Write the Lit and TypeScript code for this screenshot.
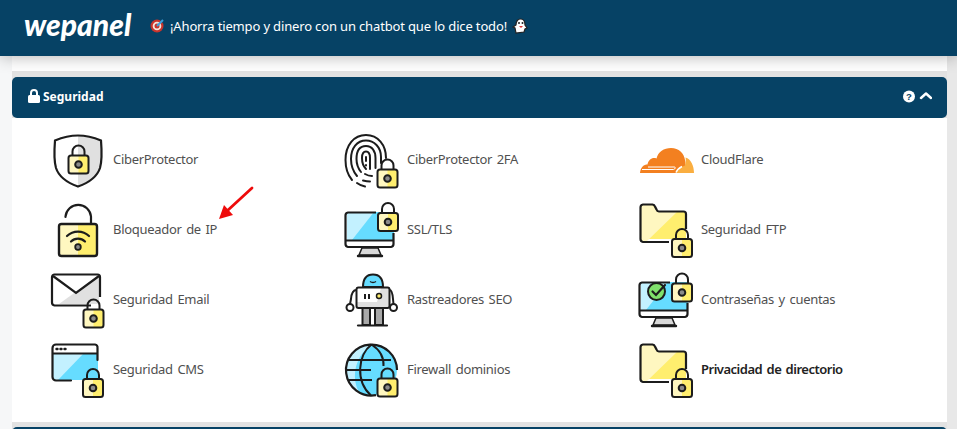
import { LitElement, html, css, svg } from "lit";
import { customElement } from "lit/decorators.js";

const INK = "#1c1c1c";
const lock = (x: number, y: number) => svg`
  <g transform="translate(${x} ${y})">
    <path d="M4.5 1V-3.5A6 6 0 0 1 16.5 -3.5V1" fill="none" stroke="${INK}" stroke-width="2"/>
    <rect x="0.5" y="0.5" width="20" height="18" rx="2.5" fill="#ffee6e"/>
    <path d="M3 0.5H10.5V18.5H3A2.5 2.5 0 0 1 0.5 16V3A2.5 2.5 0 0 1 3 0.5Z" fill="#fff7c0"/>
    <rect x="0.5" y="0.5" width="20" height="18" rx="2.5" fill="none" stroke="${INK}" stroke-width="2"/>
    <circle cx="10.5" cy="9.5" r="3.3" fill="#8a8a8a" stroke="${INK}" stroke-width="2"/>
  </g>`;

const monitor = (extra: unknown) => svg`
  <path d="M3 9H50V37H3Z" fill="#66dcff"/>
  <path d="M3 9H30L8 37H3Z" fill="#c3f1ff"/>
  <path d="M3 37H50V44H3Z" fill="#fff"/>
  <path d="M18 45H34L37 52H15Z" fill="#d9d9d9" stroke="${INK}" stroke-width="1.5"/>
  <path d="M14 53H38" stroke="${INK}" stroke-width="2.4" stroke-linecap="round"/>
  <path d="M32 9.5H4A3 3 0 0 0 1.500 12.500V41A3 3 0 0 0 4 44H47A3 3 0 0 0 49.500 41V30M2 37.500H49.500" fill="none" stroke="${INK}" stroke-width="2.200"/>
  ${extra}`;

const folder = svg`
  <path d="M5 1.500H14A3 3 0 0 1 17 3.500L19 8H46A3 3 0 0 1 48 11V36H5Z" fill="#ffee6e"/>
  <path d="M3 4A2 2 0 0 1 5 1.500H14L19 8H40L8 39H5A2 2 0 0 1 3 37Z" fill="#fff7c0"/>
  <path d="M31 39H5A3 3 0 0 1 2.500 36V4.500A3 3 0 0 1 5 1.500H14.500A3 3 0 0 1 17 3.500L18.500 6.500A3 3 0 0 0 21 8.500H45.500A2.500 2.500 0 0 1 48 11V26" fill="none" stroke="${INK}" stroke-width="2.200"/>
  ${lock(33.500, 35.500)}`;

const ICONS: Record<string, unknown> = {
  shield: svg`
    <path d="M28 2.500C18 2.500 11 5 5 7.500C4 20 4 28 6 35C9 44 18 50 28 53.500C38 50 47 44 50 35C52 28 52 20 51 7.500C45 5 38 2.500 28 2.500Z" fill="#e0e0e0"/>
    <path d="M28 2.500C18 2.500 11 5 5 7.500C4 20 4 28 6 35C9 44 18 50 28 53.500Z" fill="#fff"/>
    <path d="M28 2.500C18 2.500 11 5 5 7.500C4 20 4 28 6 35C9 44 18 50 28 53.500C38 50 47 44 50 35C52 28 52 20 51 7.500C45 5 38 2.500 28 2.500Z" fill="none" stroke="${INK}" stroke-width="2.200"/>
    ${lock(18, 22)}`,
  padlock: svg`
    <path d="M15.500 14V13.500A12.800 12.800 0 0 1 41 13.500V21" fill="none" stroke="${INK}" stroke-width="2.200" stroke-linecap="round"/>
    <rect x="9" y="21" width="38" height="32" rx="2.500" fill="#ffee6e"/>
    <path d="M9 21H28V53H9Z" fill="#fff7c0"/>
    <rect x="9" y="21" width="38" height="32" rx="2.500" fill="none" stroke="${INK}" stroke-width="2.400"/>
    <path d="M17 33A16 16 0 0 1 39 33M21 38.500A10 10 0 0 1 35 38.500" fill="none" stroke="${INK}" stroke-width="2.200" stroke-linecap="round"/>
    <circle cx="28" cy="44" r="2.800" fill="#8a8a8a" stroke="${INK}" stroke-width="1.800"/>`,
  mail: svg`
    <path d="M3 2H49V32H3Z" fill="#fff"/>
    <path d="M49 2V31H9Z" fill="#e0e0e0"/>
    <path d="M41 32.500H4.500A3 3 0 0 1 2 29.500V4A2.500 2.500 0 0 1 4.500 1.500H47.500A2.500 2.500 0 0 1 50 4V24" fill="none" stroke="${INK}" stroke-width="2.200"/>
    <path d="M3 3L26 20L49 3" fill="none" stroke="${INK}" stroke-width="2.200"/>
    ${lock(33, 36)}`,
  cms: svg`
    <path d="M3 10H48V37H3Z" fill="#66dcff"/>
    <path d="M3 10H34L8 37H3Z" fill="#c3f1ff"/>
    <path d="M21 37.500H6A3.500 3.500 0 0 1 2.500 34V5A3.500 3.500 0 0 1 6 1.500H45A3 3 0 0 1 47.500 5V17M2.500 10.500H47.500" fill="none" stroke="${INK}" stroke-width="2.200" stroke-linecap="round"/>
    <path d="M6.500 6H7.500M10.500 6H11.500M14.500 6H15.500" stroke="${INK}" stroke-width="2.400" stroke-linecap="round"/>
    ${lock(32.500, 35.500)}`,
  finger: svg`
    <g fill="none" stroke="${INK}" stroke-width="2" stroke-linecap="round">
      <path d="M8 47C3 41 1.500 35 1.500 27C1.500 12 10 2 22 2C34 2 42 12 42 25"/>
      <path d="M13 50C15 51.500 18 53 21 53.500"/>
      <path d="M13 43C8 37 7 31 7 26C7 15 13 7.500 22 7.500C30 7.500 37 14 37 24V30"/>
      <path d="M19 47.500C21 48 24 48.500 26 48.500"/>
      <path d="M17 39C13 34 12.500 30 12.500 26C12.500 17 16 13 22 13C28 13 31.500 18 31.500 25V35"/>
      <path d="M21 41C23.500 42.500 26 43 28 43"/>
      <path d="M22 36C19 33 18 29 18 25C18 20 19.500 18.500 22 18.500C24.500 18.500 26 20.500 26 25V36"/>
      <path d="M22 24V28M22 32V32.500"/>
    </g>
    ${lock(33, 36)}`,
  ssl: monitor(lock(33.500, 9.500)),
  robot: svg`
    <path d="M19 14C19 5 23 1.500 29 1.500C35 1.500 39 5 39 14Z" fill="#66dcff" stroke="${INK}" stroke-width="2"/>
    <path d="M26 8.500Q29 10.500 32 8.500" fill="none" stroke="${INK}" stroke-width="1.500"/>
    <path d="M12.500 15H45.500V33A2 2 0 0 1 43.500 35H14.500A2 2 0 0 1 12.500 33Z" fill="#fff"/>
    <path d="M37 15H45.500V33A2 2 0 0 1 43.500 35H14.500A2 2 0 0 1 12.500 33V29H33Z" fill="#e0e0e0"/>
    <path d="M14.500 14.500H43.500A2 2 0 0 1 45.500 16.500V33A2 2 0 0 1 43.500 35H14.500A2 2 0 0 1 12.500 33V16.500A2 2 0 0 1 14.500 14.500Z" fill="none" stroke="${INK}" stroke-width="2"/>
    <path d="M21 21V26M25 21V26" stroke="${INK}" stroke-width="2"/>
    <circle cx="35" cy="23" r="2.500" fill="#ffee6e" stroke="${INK}" stroke-width="1.500"/>
    <path d="M12.500 17C9 17 7.500 20 7 26L6 31M45.500 17C47.500 17 48.500 20 49 26L49.500 31" fill="none" stroke="${INK}" stroke-width="2"/>
    <circle cx="6" cy="34.500" r="3.500" fill="#fff" stroke="${INK}" stroke-width="2"/>
    <circle cx="49.500" cy="34.500" r="3.500" fill="#fff" stroke="${INK}" stroke-width="2"/>
    <path d="M18.500 35H26V52H18.500ZM31 35H39V52H31Z" fill="#a8a8a8" stroke="${INK}" stroke-width="2"/>
    <path d="M14 52.500H43" stroke="${INK}" stroke-width="2.200" stroke-linecap="round"/>`,
  globe: svg`
    <circle cx="27.500" cy="27" r="25.500" fill="#66dcff"/>
    <path d="M27.500 1.500A25.500 25.500 0 0 0 16 50C8 40 8 15 27.500 1.500Z" fill="#c3f1ff"/>
    <path d="M32 52.200A25.500 25.500 0 1 1 53 27" fill="none" stroke="${INK}" stroke-width="2.200"/>
    <g fill="none" stroke="${INK}" stroke-width="2">
      <path d="M27.500 1.500C14 12 11 38 27 52.500M27.500 1.500C36 7 40 15 39.500 23"/>
      <path d="M4 17H47M2 27H27M4 37H28"/>
    </g>
    ${lock(33, 35)}`,
  cloud: svg`
    <path d="M2 40C2.500 34 6 31.500 9.500 31.500C10.500 27 14 24 18.500 25.500C20 19 26 15 33 15C41 15 46 20 47 27C48 30 47.500 35 44.500 40Z" fill="#f38020"/>
    <path d="M47.500 24.500C53 26 56 33 56 40H38C39 36 43 33.500 46.500 33C48 30 48 27 47.500 24.500Z" fill="#faae40"/>
    <path d="M10 34H36.500C38 34 37 36.500 35.500 36.500H4" stroke="#fff" stroke-width="1" fill="none"/>
    <path d="M38 39.500C39.500 36 41 35 44 33.500" stroke="#fff" stroke-width="1.500" fill="none"/>`,
  folder,
  pass: monitor(svg`
    <circle cx="18.500" cy="18.500" r="8.500" fill="#7fe06b" stroke="${INK}" stroke-width="2"/>
    <path d="M14.500 18.500L18 22L27 12" fill="none" stroke="${INK}" stroke-width="2.200" stroke-linecap="round"/>
    ${lock(33.500, 10)}`),
};

const ITEMS: Array<[string, string, boolean?]> = [
  ["shield", "CiberProtector"], ["finger", "CiberProtector 2FA"], ["cloud", "CloudFlare"],
  ["padlock", "Bloqueador de IP"], ["ssl", "SSL/TLS"], ["folder", "Seguridad FTP"],
  ["mail", "Seguridad Email"], ["robot", "Rastreadores SEO"], ["pass", "Contraseñas y cuentas"],
  ["cms", "Seguridad CMS"], ["globe", "Firewall dominios"], ["folder", "Privacidad de directorio", true],
];

@customElement("app-root")
export class AppRoot extends LitElement {
  static styles = css`
    :host { display: block; width: 957px; height: 429px; overflow: hidden; position: relative;
      background: linear-gradient(90deg, #f6f7f8 12px, #e8e8e8 12px); font-family: "Noto Sans", "Open Sans", sans-serif; color: #505050; }
    .top { height: 56px; background: #064265; display: flex; align-items: center; padding-left: 24px; color: #fff; position: relative; z-index: 2; box-shadow: 0 0 16px rgba(0,0,0,.32); }
    .logo { font: italic 900 30px/1 Lato, sans-serif; width: 126px; margin-top: -8px; }
    .promo { display: flex; align-items: center; gap: 5px; font-size: 13px; letter-spacing: -0.15px; margin-top: -5px; }
    .promo svg { display: block; }
    main { margin: 0 10px 0 12px; background: #e2e2e2; }
    .fade { height: 15px; background: #fff; }
    .panel { margin-top: 6px; }
    .head { height: 41px; background: #064265; border-radius: 5px; display: flex; align-items: center; padding: 0 15px 3px 16px; box-sizing: border-box; color: #fff; font-weight: 700; font-size: 12px; gap: 3px; }
    .head .grow { flex: 1; }
    .body { background: #fff; height: 304px; margin-bottom: 5px; padding: 15px 0 0 38px; box-sizing: border-box; display: grid; grid-template-columns: repeat(3, 294px); grid-auto-rows: 70px; }
    .item { display: flex; align-items: center; font-size: 13px; letter-spacing: -0.3px; word-spacing: 1.5px; height: 56px; }
    .item svg { flex: none; margin-right: 7px; display: block; }
    .item span { padding-bottom: 4px; }
    .item.on { font-weight: 600; color: #222; letter-spacing: -0.5px; }
    .next { height: 6px; background: #064265; border-radius: 5px 5px 0 0; }
    .arrow { position: absolute; left: 215px; top: 183px; }
  `;

  render() {
    return html`
      <div class="top">
        <div class="logo">wepanel</div>
        <div class="promo">
          <svg width="15" height="15" viewBox="0 0 15 15"><circle cx="7" cy="8" r="6.500" fill="#c8342c"/><circle cx="7" cy="8" r="4.300" fill="#f4e6dc"/><circle cx="7" cy="8" r="2.500" fill="#c8342c"/><path d="M7 8L13 2" stroke="#3aa0dc" stroke-width="2"/></svg>
          <span>¡Ahorra tiempo y dinero con un chatbot que lo dice todo!</span>
          <svg width="16" height="16" viewBox="0 0 16 16"><path d="M4 15L3 10L1 9L4 7C4 3 6 1 8.500 1C11.500 1 13 3.500 13 7L15 10L13 11L12 14Z" fill="#fff" stroke="#222" stroke-width="1.200"/><circle cx="7" cy="5" r="1" fill="#222"/><circle cx="10.500" cy="5" r="1" fill="#222"/><path d="M7 8H11L9 10Z" fill="#d33"/></svg>
        </div>
      </div>
      <main>
        <div class="fade"></div>
        <section class="panel">
          <div class="head">
            <svg width="12" height="14" viewBox="0 0 12 14"><path d="M3 6V4A3 3 0 0 1 9 4V6" fill="none" stroke="#fff" stroke-width="2"/><rect x="0" y="6" width="12" height="8" rx="1.500" fill="#fff"/></svg>
            <span>Seguridad</span>
            <span class="grow"></span>
            <svg width="29" height="13" viewBox="0 0 29 13"><circle cx="6" cy="6.500" r="6" fill="#fff"/><text x="6" y="10" font-size="9.500" font-weight="700" text-anchor="middle" fill="#064265" font-family="Liberation Sans">?</text><path d="M18 8L23 3.500L28 8" fill="none" stroke="#fff" stroke-width="2.400" stroke-linecap="round" stroke-linejoin="round"/></svg>
          </div>
          <div class="body">
            ${ITEMS.map(([icon, label, on]) => html`
              <div class="item ${on ? "on" : ""}">
                <svg width="56" height="56" viewBox="0 0 56 56" overflow="visible">${ICONS[icon]}</svg>
                <span>${label}</span>
              </div>`)}
          </div>
        </section>
        <div class="next"></div>
      </main>
      <svg class="arrow" width="42" height="40" viewBox="0 0 42 40"><path d="M37 5L12 28" stroke="#ee0b0b" stroke-width="2.800" stroke-linecap="round"/><path d="M4 36L9 22L18 32Z" fill="#ee0b0b"/></svg>
    `;
  }
}
